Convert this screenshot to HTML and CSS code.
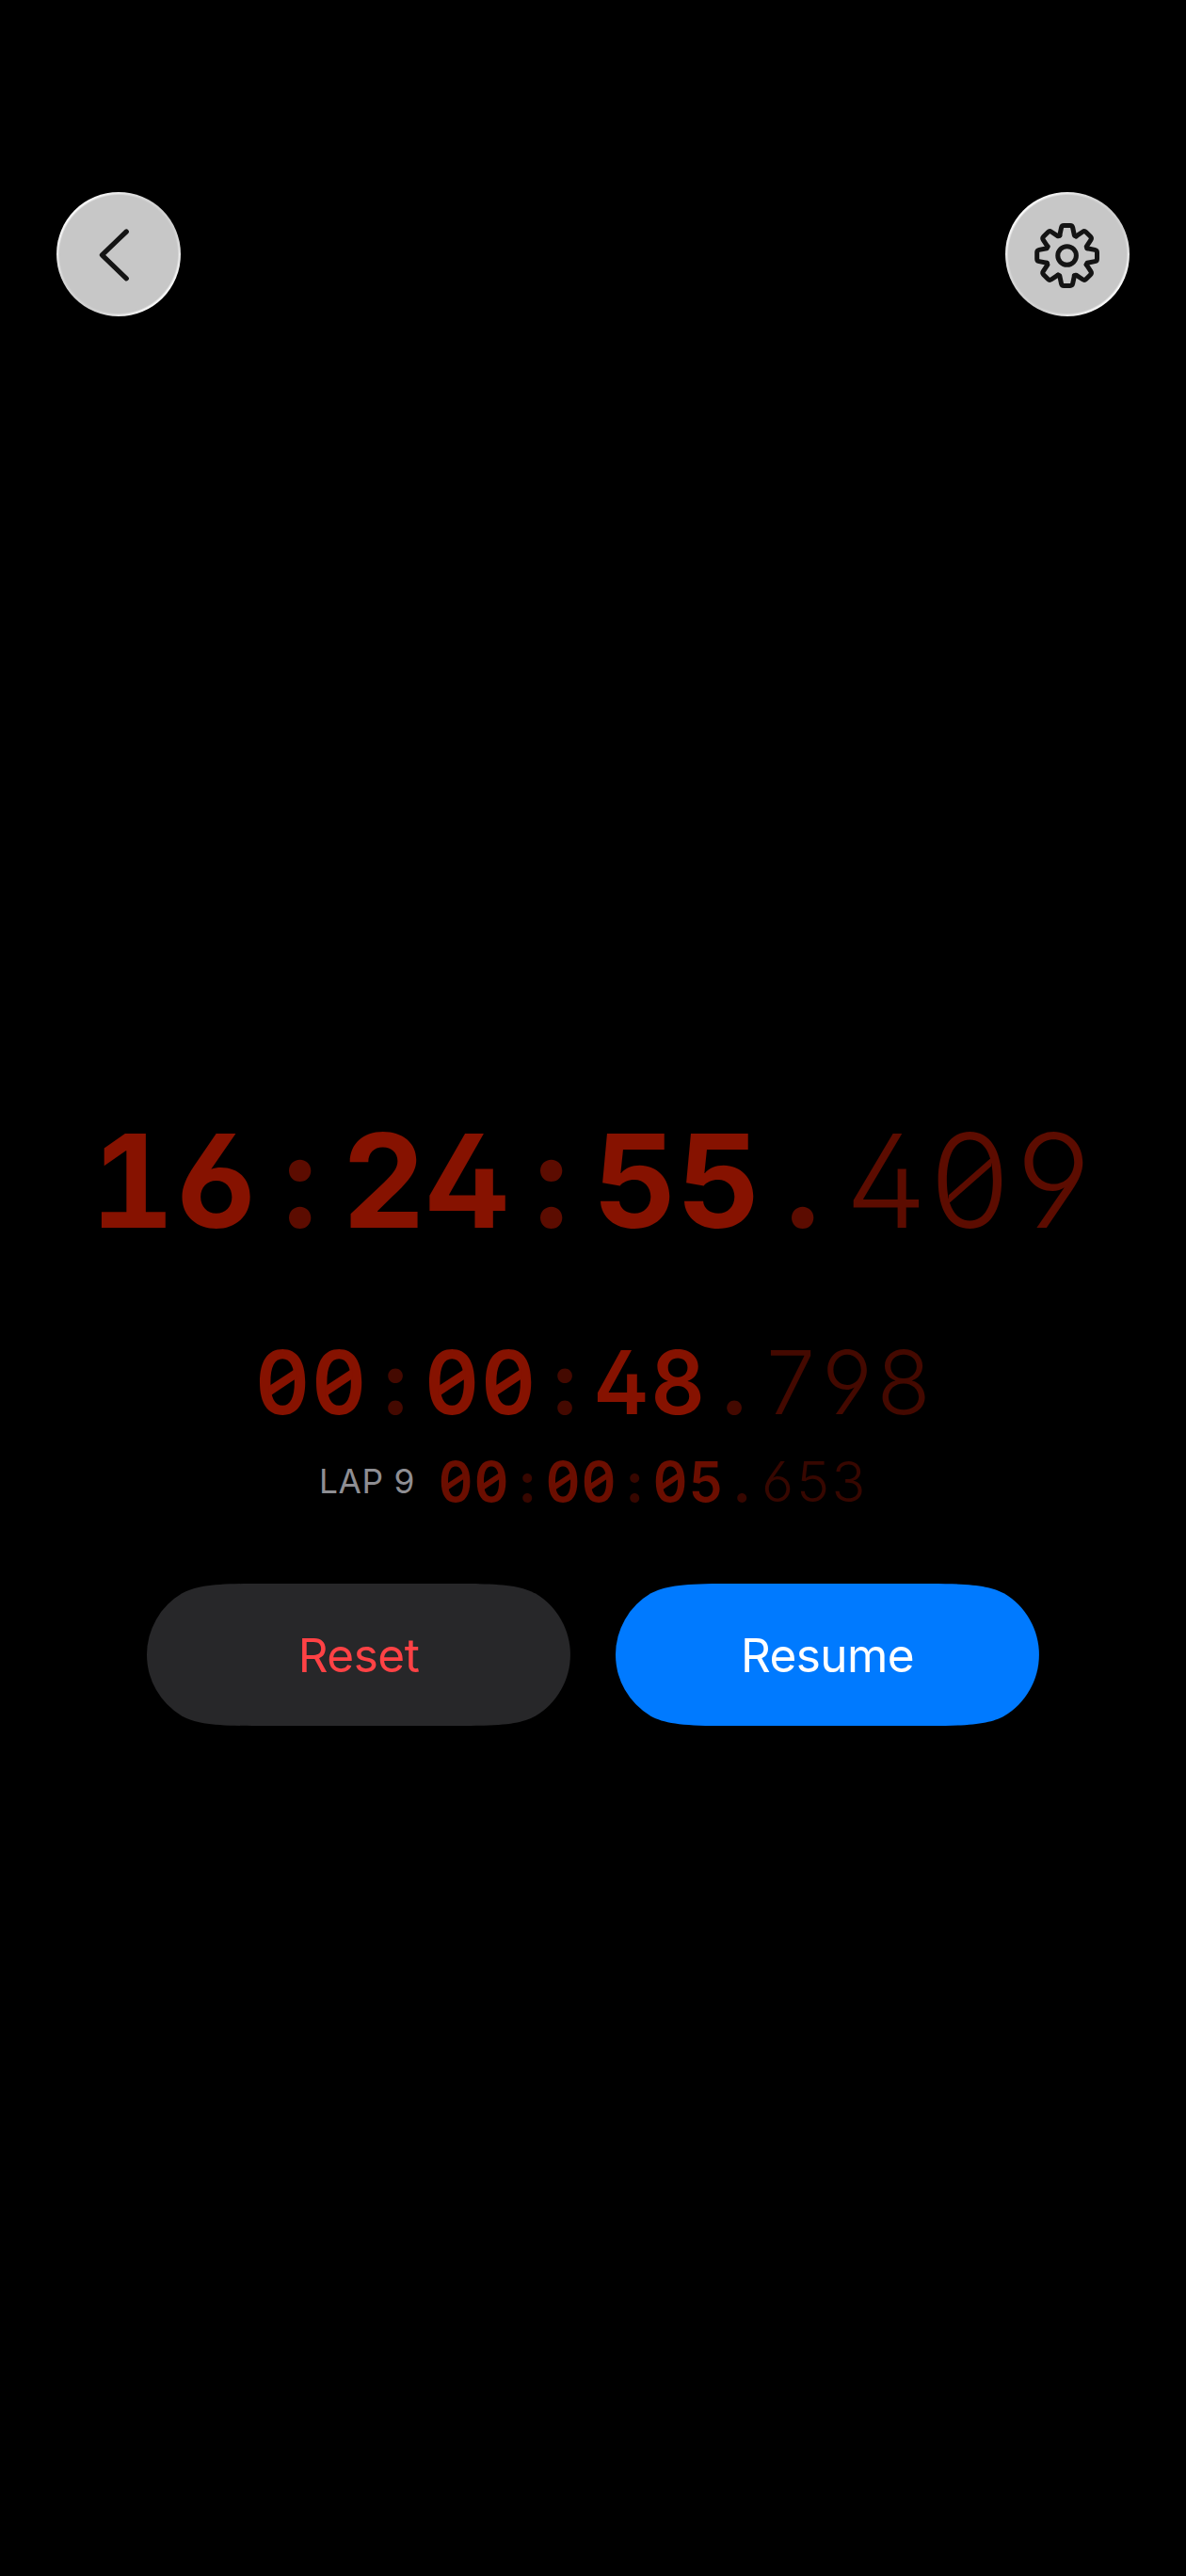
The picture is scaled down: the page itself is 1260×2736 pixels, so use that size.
FILE: index.html
```html
<!DOCTYPE html>
<html lang="en">
<head>
<meta charset="utf-8">
<title>Stopwatch</title>
<link rel="stylesheet" href="styles.css">
</head>
<body>
<main class="screen">
  <header class="topbar">
    <button class="round" aria-label="Back">
      <svg viewBox="-66 -66 132 132" fill="none" stroke="#141414" stroke-width="5.2" stroke-linecap="round" stroke-linejoin="round"><path d="M8.3 -24L-17.6 0.8L8.3 25.8"/></svg>
    </button>
    <button class="round" aria-label="Settings">
      <svg viewBox="-66 -66 132 132" fill="none" stroke="#141414" stroke-width="5" stroke-linecap="round" stroke-linejoin="round">
        <g transform="translate(-.4 1.5)">
          <circle r="9.8"/>
          <path id="tooth" d="M-7.8 -21.4L-6.1 -29.6Q-5.6 -31.9 -3.4 -31.9H3.4Q5.6 -31.9 6.1 -29.6L7.8 -21.4L9.6 -20.6"/>
          <use href="#tooth" transform="rotate(45)"/>
          <use href="#tooth" transform="rotate(90)"/>
          <use href="#tooth" transform="rotate(135)"/>
          <use href="#tooth" transform="rotate(180)"/>
          <use href="#tooth" transform="rotate(225)"/>
          <use href="#tooth" transform="rotate(270)"/>
          <use href="#tooth" transform="rotate(315)"/>
        </g>
      </svg>
    </button>
  </header>

  <div class="time clock"><b>1</b><b>6</b><i>:</i><b>2</b><b>4</b><i>:</i><b>5</b><b>5</b><i>.</i><s>4</s><s class="zero">0</s><s>9</s></div>

  <div class="time total"><b class="zero">0</b><b class="zero">0</b><i>:</i><b class="zero">0</b><b class="zero">0</b><i>:</i><b>4</b><b>8</b><i>.</i><s>7</s><s>9</s><s>8</s></div>

  <div class="laprow">
    <span class="label">LAP 9</span>
    <div class="time lap"><b class="zero">0</b><b class="zero">0</b><i>:</i><b class="zero">0</b><b class="zero">0</b><i>:</i><b class="zero">0</b><b>5</b><i>.</i><s>6</s><s>5</s><s>3</s></div>
  </div>

  <div class="actions">
    <button class="pill reset">Reset</button>
    <button class="pill resume">Resume</button>
  </div>
</main>
</body>
</html>
```
FILE: styles.css
```css
* { box-sizing: border-box; }
body { margin: 0; background: #000; }
button { border: 0; padding: 0; font: inherit; }

.screen {
  width: 1260px;
  height: 2736px;
  padding-top: 204px;
  display: flex;
  flex-direction: column;
  align-items: center;
  font-family: Inter, "Liberation Sans", sans-serif;
  background: #000;
}

.topbar {
  align-self: stretch;
  display: flex;
  justify-content: space-between;
  padding: 0 60px;
}
.round {
  width: 132px;
  height: 132px;
  border-radius: 50%;
  background:
    radial-gradient(circle, #c7c7c7 0 62.5px, transparent 64.5px),
    linear-gradient(135deg, #fff 12%, #d6d6d6 38%, #d0d0d0 62%, #fff 88%);
}
.round svg { display: block; width: 132px; height: 132px; }

.time {
  display: grid;
  grid-template-columns: repeat(12, var(--pitch));
  line-height: 1;
  font-feature-settings: "tnum", "cv02", "cv03", "cv04";
}
.time > * {
  position: relative;
  font-style: normal;
  text-decoration: none;
  display: flex;
  justify-content: center;
}
.time b { color: var(--main); font-weight: var(--bold); transform: scaleX(var(--sx)); }
.time i { color: var(--dim); font-weight: 700; }
.time s { color: var(--dim); font-weight: 300; }

/* Slash inside the zero */
.zero::after {
  content: "";
  position: absolute;
  left: calc(50% - .165em);
  top: calc(50% - .165em);
  width: .33em;
  height: .33em;
  background: currentColor;
  clip-path: polygon(0 63%, 100% 0, 100% 35%, 0 100%);
}
.time s.zero::after { clip-path: polygon(0 84%, 100% -4%, 100% 16%, 0 104%); }

.clock {
  --pitch: 89px; --bold: 700; --sx: 1;
  --main: #861200; --dim: #5c0c00;
  margin-top: 849px;
  font-size: 138px;
}
.total {
  --pitch: 60px; --bold: 600; --sx: .96;
  --main: #861200; --dim: #440900;
  margin-top: 99px;
  font-size: 93px;
}
.laprow {
  display: flex;
  align-items: flex-start;
  gap: 24px;
  margin-top: 29px;
}
.lap {
  --pitch: 38px; --bold: 600; --sx: .96;
  --main: #6b0e00; --dim: #370700;
  font-size: 59px;
}
.label {
  padding-top: 12px;
  font-size: 35.3px;
  line-height: 1;
  letter-spacing: .7px;
  color: #8e8e93;
}

.actions { display: flex; gap: 48px; margin-top: 79px; }
.pill {
  width: 450px;
  height: 151px;
  font-size: 49.5px;
  clip-path: path("M0 75.5A75.5 75.5 0 0 1 37 10.6C52 2.5 70 0 116 0H334C380 0 398 2.5 413 10.6A75.5 75.5 0 0 1 413 140.4C398 148.5 380 151 334 151H116C70 151 52 148.5 37 140.4A75.5 75.5 0 0 1 0 75.5Z");
}
.reset { color: #ff4245; background: #272729; letter-spacing: -.5px; }
.resume { color: #fff; background: #007aff; letter-spacing: -.6px; }
```
